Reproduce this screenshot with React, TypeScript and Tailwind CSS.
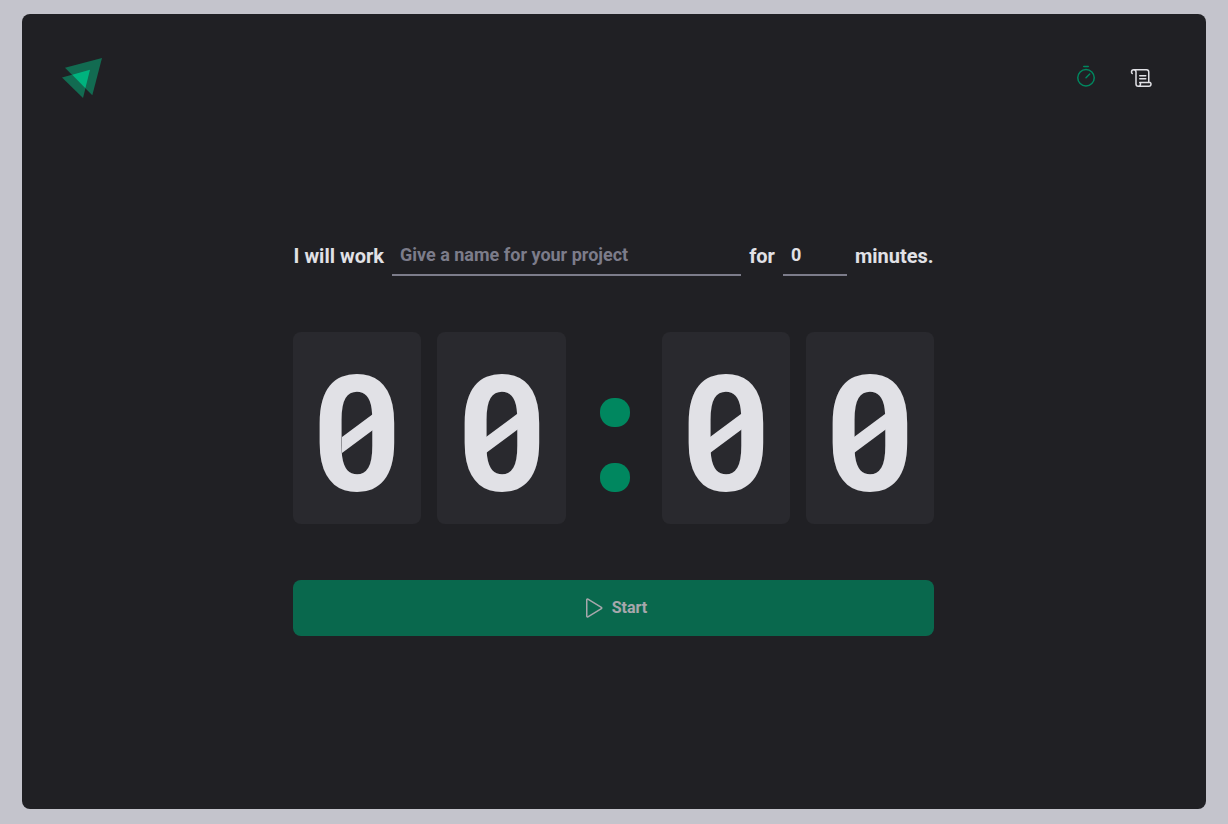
import { PiPlay, PiScroll, PiTimer } from "react-icons/pi";

function Logo() {
  return (
    <svg width="40" height="40" viewBox="0 0 40 40" fill="none" aria-label="Logo">
      <path d="M3 9.8 40 0 30.3 37.3Z" fill="#126b51" />
      <path d="M0 19.4 28 11.8 21 40Z" fill="#126b51" />
      <path d="M10.2 16.8 28 11.8 23.4 30.2Z" fill="#00b37e" />
    </svg>
  );
}

function Digit({ value }: { value: string }) {
  return (
    <span className="relative flex h-48 flex-1 justify-center rounded-lg bg-[#29292e] pl-[0.5px] pt-10">
      <span className="scale-x-[0.968] scale-y-[1.006] text-[160px] leading-[128px]">{value}</span>
      {value === "0" && (
        <i className="absolute left-[48.5px] top-[93.5px] h-[15.5px] w-[32.5px] -skew-y-[36.5deg] bg-[#e1e1e6]" />
      )}
    </span>
  );
}

function Separator() {
  return (
    <span className="relative flex h-48 w-16 justify-center pt-[37px] text-[160px] leading-[128px] text-[#00875f]">
      :
      <i className="absolute left-[18px] top-[66px] h-[29px] w-[30.5px] rounded-[14px] bg-[#00875f]" />
      <i className="absolute left-[18px] top-[131px] h-[29px] w-[30.5px] rounded-[14px] bg-[#00875f]" />
    </span>
  );
}

export default function App() {
  return (
    <div className="h-[824px] bg-[#c4c4cc] px-[22px] pb-[15px] pt-[14px] font-['Roboto',sans-serif] text-[#e1e1e6]">
      <div className="flex h-full flex-col rounded-lg bg-[#202024] p-10">
        <header className="flex h-12 shrink-0 items-center justify-between">
          <Logo />
          <nav className="flex gap-2">
            <a className="flex size-12 items-center justify-center pb-[1.5px] text-[#00875f]" title="Timer">
              <PiTimer size={24} />
            </a>
            <a className="flex size-12 items-center justify-center" title="History">
              <PiScroll size={24} />
            </a>
          </nav>
        </header>
        <main className="flex flex-1 items-center justify-center pr-px">
          <form className="flex w-[641px] flex-col gap-14 font-bold">
            <div className="flex items-center gap-2 pl-[0.6px] pr-[0.4px] text-xl">
              <label htmlFor="task">I will work</label>
              <input
                id="task"
                placeholder="Give a name for your project"
                className="h-10 min-w-0 flex-1 border-b-2 border-[#7c7c8a] px-2 text-lg placeholder:text-[#7c7c8a]"
              />
              <label htmlFor="minutes">for</label>
              <input
                id="minutes"
                defaultValue="0"
                className="h-10 w-16 border-b-2 border-[#7c7c8a] px-2 text-lg"
              />
              <span>minutes.</span>
            </div>
            <div className="flex gap-4">
              <Digit value="0" />
              <Digit value="0" />
              <Separator />
              <Digit value="0" />
              <Digit value="0" />
            </div>
            <button
              type="button"
              className="flex h-14 items-center justify-center gap-2 rounded-lg bg-[#00875f] opacity-70"
            >
              <PiPlay size={24} />
              Start
            </button>
          </form>
        </main>
      </div>
    </div>
  );
}
